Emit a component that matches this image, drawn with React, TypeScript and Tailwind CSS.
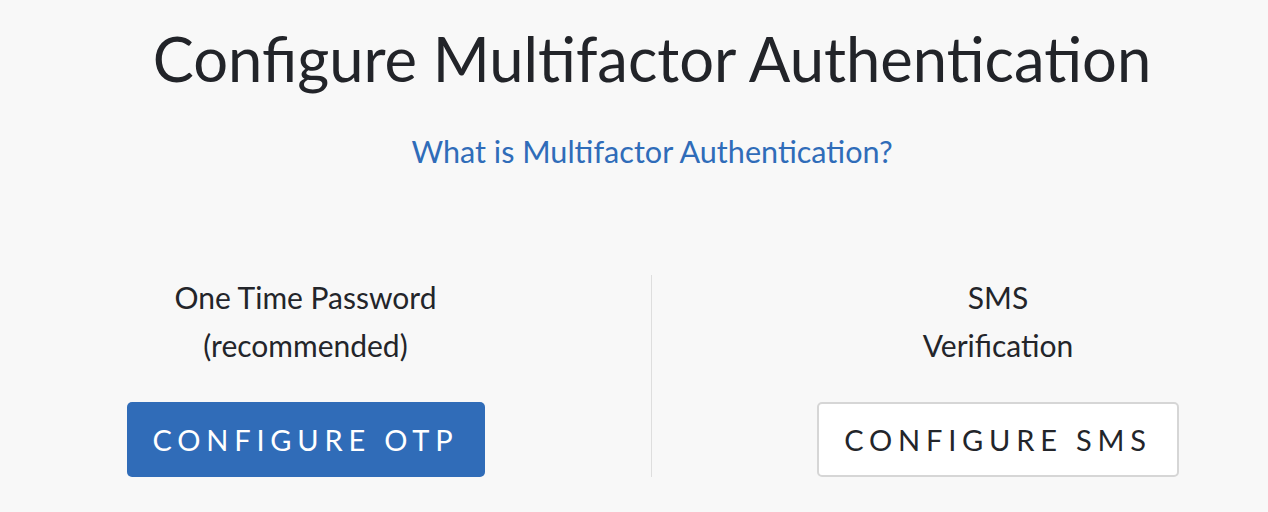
import React from 'react';

const App: React.FC = () => {
    return (
        <div className="min-h-[512px] w-full bg-[#f8f8f8] text-[#23252a] overflow-hidden" style={{ fontFamily: 'Lato, "Open Sans", sans-serif' }}>
            <div className="flex flex-col items-center pt-[21px] pl-[36px]">
                <h1 className="text-[61.5px] leading-[74px] font-normal text-[#222429] whitespace-nowrap">Configure Multifactor Authentication</h1>
                <a href="#" className="mt-[39px] text-[30.6px] leading-[36px] text-[#2f6cb9]">What is Multifactor Authentication?</a>
            </div>
            <div className="flex mt-[103px]">
                <div className="w-[651px] shrink-0 pr-[40px] flex flex-col items-center">
                    <div className="text-[30px] leading-[48px] text-center">
                        <div>One Time Password</div>
                        <div>(recommended)</div>
                    </div>
                    <button className="mt-[33px] w-[358px] h-[75px] rounded-[5px] bg-[#306cb8] text-white text-[29px] tracking-[0.2em]">
                        CONFIGURE OTP
                    </button>
                </div>
                <div className="w-px bg-[#dedede] shrink-0 mt-[2px] h-[202px]" />
                <div className="flex-1 pl-[76px] flex flex-col items-center min-w-0">
                    <div className="text-[30px] leading-[48px] text-center">
                        <div>SMS</div>
                        <div>Verification</div>
                    </div>
                    <button className="mt-[33px] w-[362px] h-[75px] rounded-[5px] bg-white border-2 border-[#d6d6d6] text-[#23252a] text-[29px] tracking-[0.2em]">
                        CONFIGURE SMS
                    </button>
                </div>
            </div>
        </div>
    );
};

export default App;
